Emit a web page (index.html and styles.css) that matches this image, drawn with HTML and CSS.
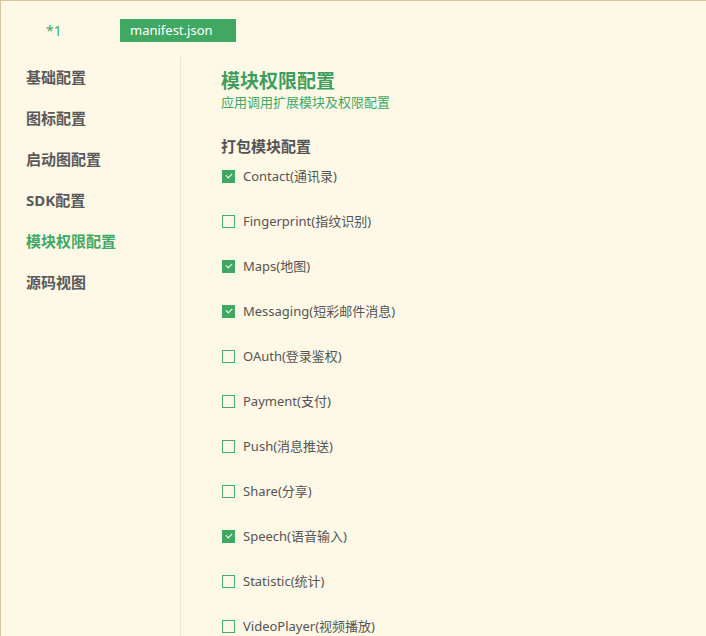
FILE: index.html
```html
<!DOCTYPE html>
<html lang="zh">
<head>
<meta charset="utf-8">
<link rel="stylesheet" href="styles.css">
</head>
<body>
<div class="page">
  <div class="header">
    <span class="mark">*1</span>
    <span class="tab">manifest.json</span>
  </div>
  <div class="main">
    <ul class="side">
      <li>基础配置</li>
      <li>图标配置</li>
      <li>启动图配置</li>
      <li>SDK配置</li>
      <li class="active">模块权限配置</li>
      <li>源码视图</li>
    </ul>
    <div class="content">
      <h1 class="title">模块权限配置</h1>
      <p class="sub">应用调用扩展模块及权限配置</p>
      <h2 class="sec">打包模块配置</h2>
      <ul class="list">
        <li><span class="cb on"></span>Contact(通讯录)</li>
        <li><span class="cb"></span>Fingerprint(指纹识别)</li>
        <li><span class="cb on"></span>Maps(地图)</li>
        <li><span class="cb on"></span>Messaging(短彩邮件消息)</li>
        <li><span class="cb"></span>OAuth(登录鉴权)</li>
        <li><span class="cb"></span>Payment(支付)</li>
        <li><span class="cb"></span>Push(消息推送)</li>
        <li><span class="cb"></span>Share(分享)</li>
        <li><span class="cb on"></span>Speech(语音输入)</li>
        <li><span class="cb"></span>Statistic(统计)</li>
        <li><span class="cb"></span>VideoPlayer(视频播放)</li>
      </ul>
    </div>
  </div>
</div>
</body>
</html>
```
FILE: styles.css
```css
html, body {
  margin: 0;
  padding: 0;
  background: #fef8e6;
  height: 100%;
  overflow: hidden;
}
body {
  font-family: "Noto Sans", "Noto Sans CJK SC", sans-serif;
  color: #555;
}
.page {
  border-top: 1px solid #d6c69c;
  border-left: 1px solid #d6c69c;
  height: 100%;
  box-sizing: border-box;
}
.header {
  height: 56px;
  display: flex;
  align-items: center;
  padding-top: 3px;
  box-sizing: border-box;
}
.mark {
  margin-left: 45px;
  width: 74px;
  font-size: 14px;
  color: #3fa868;
  line-height: 23px;
}
.tab {
  background: #41a863;
  color: #fff;
  font-size: 13px;
  line-height: 23px;
  height: 23px;
  width: 116px;
  box-sizing: border-box;
  padding-left: 10px;
}
.main {
  display: flex;
  height: calc(100% - 56px);
}
.side {
  list-style: none;
  margin: 0;
  padding: 0 0 0 25px;
  width: 180px;
  box-sizing: border-box;
  border-right: 1px solid #f0e6c6;
  flex: none;
}
.side li {
  font-size: 15px;
  font-weight: bold;
  line-height: 41px;
  color: #5a5a5a;
}
.side li.active {
  color: #3fa868;
}
.content {
  padding: 12px 0 0 40px;
}
.title {
  margin: 0;
  font-size: 19px;
  line-height: 24px;
  font-weight: bold;
  color: #3f9e5f;
}
.sub {
  margin: 0;
  font-size: 13px;
  line-height: 18px;
  color: #3fa868;
}
.sec {
  margin: 25px 0 0;
  font-size: 15px;
  line-height: 20px;
  font-weight: bold;
  color: #555;
}
.list {
  list-style: none;
  margin: 10px 0 0;
  padding: 0;
  display: flex;
  flex-direction: column;
  gap: 25px;
}
.list li {
  display: flex;
  align-items: center;
  font-size: 13px;
  line-height: 20px;
  color: #555;
}
.cb {
  width: 13px;
  height: 13px;
  box-sizing: border-box;
  border: 1px solid #4aa96b;
  margin: 0 8px 0 1px;
  flex: none;
  position: relative;
}
.cb.on {
  background: #41a863;
  border-color: #41a863;
}
.cb.on::after {
  content: "";
  position: absolute;
  left: 3px;
  top: 2px;
  width: 5px;
  height: 3px;
  border-left: 1.5px solid #fff;
  border-bottom: 1.5px solid #fff;
  transform: rotate(-45deg);
}
```
